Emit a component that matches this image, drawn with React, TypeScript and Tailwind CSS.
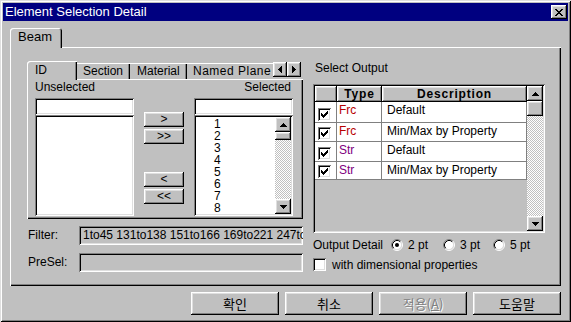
import React from 'react';

// win95-ish bevels
const raised =
  'shadow-[inset_-1px_-1px_#000,inset_1px_1px_#fff,inset_-2px_-2px_#808080,inset_2px_2px_#dfdfdf]';
const sunken =
  'shadow-[inset_1px_1px_#808080,inset_-1px_-1px_#fff,inset_2px_2px_#000,inset_-2px_-2px_#dfdfdf]';
const dither =
  'bg-[image:repeating-conic-gradient(#c0c0c0_0_25%,#fff_0_50%)] bg-[length:2px_2px]';

const UP = ['...X...', '..XXX..', '.XXXXX.', 'XXXXXXX'];
const DOWN = ['XXXXXXX', '.XXXXX.', '..XXX..', '...X...'];
const LEFT = ['...X', '..XX', '.XXX', 'XXXX', '.XXX', '..XX', '...X'];
const RIGHT = ['X...', 'XX..', 'XXX.', 'XXXX', 'XXX.', 'XX..', 'X...'];
const CLOSE = ['XX....XX', '.XX..XX.', '..XXXX..', '...XX...', '..XXXX..', '.XX..XX.', 'XX....XX'];
const CHECK = ['......X', '.....XX', 'X...XXX', 'XX.XXX.', 'XXXXX..', '.XXX...', '..X....'];

function Px({ rows, color = '#000' }: { rows: string[]; color?: string }) {
  return (
    <svg width={rows[0].length} height={rows.length} shapeRendering="crispEdges">
      {rows.flatMap((r, y) =>
        r.split('').map((c, x) =>
          c === 'X' ? <rect key={`${x}-${y}`} x={x} y={y} width={1} height={1} fill={color} /> : null
        )
      )}
    </svg>
  );
}

function ScrollBtn({ dir, h = 'h-[15px]' }: { dir: 'up' | 'down'; h?: string }) {
  return (
    <div className={`${h} w-full bg-[#c0c0c0] flex items-center justify-center ${raised}`}>
      <Px rows={dir === 'up' ? UP : DOWN} />
    </div>
  );
}

function CheckBox({ checked }: { checked: boolean }) {
  return (
    <div className={`w-[13px] h-[13px] bg-white flex items-center justify-center shrink-0 ${sunken}`}>
      {checked && <Px rows={CHECK} />}
    </div>
  );
}

function Radio({ checked }: { checked: boolean }) {
  return (
    <svg width="12" height="12" className="shrink-0">
      <circle cx="6" cy="6" r="4.5" fill="#fff" />
      <path d="M2.11 9.89 A5.5 5.5 0 0 1 9.89 2.11" fill="none" stroke="#808080" strokeWidth="1" />
      <path d="M9.89 2.11 A5.5 5.5 0 0 1 2.11 9.89" fill="none" stroke="#fff" strokeWidth="1" />
      <path d="M2.82 9.18 A4.5 4.5 0 0 1 9.18 2.82" fill="none" stroke="#000" strokeWidth="1" />
      <path d="M9.18 2.82 A4.5 4.5 0 0 1 2.82 9.18" fill="none" stroke="#dfdfdf" strokeWidth="1" />
      {checked && <circle cx="6" cy="6" r="2" fill="#000" />}
    </svg>
  );
}

const ROWS = [
  { type: 'Frc', color: 'text-[#b80000]', desc: 'Default', h: 'h-[21px]' },
  { type: 'Frc', color: 'text-[#b80000]', desc: 'Min/Max by Property', h: 'h-[19px]' },
  { type: 'Str', color: 'text-[#800080]', desc: 'Default', h: 'h-[20px]' },
  { type: 'Str', color: 'text-[#800080]', desc: 'Min/Max by Property', h: 'h-[18px]' },
];

function SmallBtn({ label, mt }: { label: string; mt: string }) {
  return (
    <div className={`${mt} h-[15px] w-[40px] bg-[#c0c0c0] flex items-center justify-center leading-[13px] ${raised}`}>
      {label}
    </div>
  );
}

export default function App() {
  return (
    <div className="w-[571px] h-[322px] bg-[#c0c0c0] p-[3px] flex flex-col overflow-hidden font-['Liberation_Sans','Noto_Sans_CJK_KR',sans-serif] text-[12px] leading-[14px] text-black shadow-[inset_1px_1px_#dfdfdf,inset_-1px_-1px_#000,inset_2px_2px_#fff,inset_-2px_-2px_#808080]">
      {/* Title bar */}
      <div className="h-[18px] bg-[#000080] flex items-center justify-between pl-[2px] pr-[1px]">
        <span className="text-white text-[13px] leading-[18px]">Element Selection Detail</span>
        <div className={`w-[16px] h-[14px] bg-[#c0c0c0] flex items-center justify-center ${raised}`}>
          <Px rows={CLOSE} />
        </div>
      </div>

      <div className="flex flex-col px-[7px] pt-[7px]">
        {/* Beam tab */}
        <div className="flex">
          <div className="relative z-10 w-[52px] h-[20px] -mb-px bg-[#c0c0c0] rounded-t-[3px] pl-[8px] pt-[2px] text-[13px] shadow-[inset_1px_1px_#fff,inset_-1px_0_#000,inset_-2px_0_#808080]">
            Beam
          </div>
        </div>

        {/* Outer panel */}
        <div className="h-[239px] flex pl-[17px] pt-[14px] shadow-[inset_1px_1px_#fff,inset_-1px_-1px_#000,inset_-2px_-2px_#808080]">
          {/* Left column */}
          <div className="w-[276px] flex flex-col">
            <div className="relative z-10 h-[18px] flex">
              <div className="w-[246px] h-[19px] flex overflow-hidden">
                <div className="w-[50px] h-[19px] shrink-0 bg-[#c0c0c0] rounded-tl-[3px] pl-[8px] pt-[2px] shadow-[inset_1px_1px_#fff,inset_-1px_0_#000,inset_-2px_0_#808080]">
                  ID
                </div>
                <div className="mt-[2px] w-[53px] h-[16px] shrink-0 pl-[6px] pt-[1px] shadow-[inset_0_1px_#fff,inset_-1px_0_#000,inset_-2px_0_#808080]">
                  Section
                </div>
                <div className="mt-[2px] w-[57px] h-[16px] shrink-0 pl-[7px] pt-[1px] shadow-[inset_0_1px_#fff,inset_-1px_0_#000,inset_-2px_0_#808080]">
                  Material
                </div>
                <div className="mt-[2px] w-[90px] h-[16px] shrink-0 pl-[6px] pt-[1px] whitespace-nowrap tracking-[0.5px] shadow-[inset_0_1px_#fff]">
                  Named Plane
                </div>
              </div>
              <div className={`mt-[1px] w-[14px] h-[15px] bg-[#c0c0c0] flex items-center justify-center ${raised}`}>
                <Px rows={LEFT} />
              </div>
              <div className={`mt-[1px] w-[14px] h-[15px] bg-[#c0c0c0] flex items-center justify-center ${raised}`}>
                <Px rows={RIGHT} />
              </div>
            </div>

            {/* Inner panel */}
            <div className="relative h-[140px] flex pl-[8px] pt-[1px] shadow-[inset_1px_1px_#fff,inset_-1px_-1px_#000,inset_-2px_-2px_#808080]">
              <div className="w-[99px] flex flex-col">
                <div className="h-[14px]">Unselected</div>
                <div className={`mt-[4px] h-[17px] bg-white ${sunken}`} />
                <div className={`h-[101px] bg-white ${sunken}`} />
              </div>
              <div className="ml-[10px] w-[40px] flex flex-col pt-[32px]">
                <SmallBtn label=">" mt="mt-0" />
                <SmallBtn label=">>" mt="mt-[2px]" />
                <SmallBtn label="<" mt="mt-[28px]" />
                <SmallBtn label="<<" mt="mt-[2px]" />
              </div>
              <div className="ml-[10px] w-[99px] flex flex-col">
                <div className="h-[14px] text-right pr-[2px]">Selected</div>
                <div className={`mt-[4px] h-[17px] bg-white ${sunken}`} />
                <div className={`h-[101px] bg-white p-[2px] flex ${sunken}`}>
                  <div className="flex-1 overflow-hidden pl-[18px] pt-[1px] text-[12px] leading-[12px]">
                    {[1, 2, 3, 4, 5, 6, 7, 8].map((n) => (
                      <div key={n} className="h-[12px]">{n}</div>
                    ))}
                  </div>
                  <div className="w-[16px] flex flex-col">
                    <ScrollBtn dir="up" />
                    <div className={`h-[8px] bg-[#c0c0c0] ${raised}`} />
                    <div className={`flex-1 ${dither}`} />
                    <ScrollBtn dir="down" />
                  </div>
                </div>
              </div>
            </div>

            {/* Filter / PreSel */}
            <div className="mt-[7px] h-[19px] flex">
              <div className="w-[52px] pl-[1px] leading-[19px]">Filter:</div>
              <div className={`w-[224px] h-[19px] pl-[4px] pr-[2px] overflow-hidden whitespace-nowrap leading-[19px] ${sunken}`}>
                1to45 131to138 151to166 169to221 247to261 263to280
              </div>
            </div>
            <div className="mt-[8px] h-[19px] flex">
              <div className="w-[52px] pl-[1px] leading-[19px]">PreSel:</div>
              <div className={`w-[224px] h-[19px] ${sunken}`} />
            </div>
          </div>

          {/* Right column */}
          <div className="ml-[10px] w-[232px] flex flex-col">
            <div className="h-[14px] pl-[2px]">Select Output</div>
            <div className={`mt-[9px] h-[149px] p-[2px] flex ${sunken}`}>
              <div className="w-[212px] flex flex-col">
                <div className="h-[16px] flex font-bold tracking-[0.8px] leading-[16px]">
                  <div className={`w-[22px] ${raised}`} />
                  <div className={`w-[45px] text-center ${raised}`}>Type</div>
                  <div className={`w-[145px] text-center ${raised}`}>Description</div>
                </div>
                {ROWS.map((r, i) => (
                  <div key={i} className={`${r.h} flex bg-white`}>
                    <div className="w-[22px] border-r border-b border-[#808080] flex items-end pl-[3px] pb-[1px]">
                      <CheckBox checked />
                    </div>
                    <div className={`w-[45px] border-r border-b border-[#808080] pl-[2px] pt-[1px] ${r.color}`}>
                      {r.type}
                    </div>
                    <div className="w-[145px] border-r border-b border-[#808080] pl-[5px] pt-[1px]">
                      {r.desc}
                    </div>
                  </div>
                ))}
              </div>
              <div className="w-[16px] flex flex-col">
                <ScrollBtn dir="up" />
                <div className={`h-[15px] bg-[#c0c0c0] ${raised}`} />
                <div className={`flex-1 ${dither}`} />
                <ScrollBtn dir="down" />
              </div>
            </div>

            <div className="mt-[4px] h-[16px] flex items-center">
              <span>Output Detail</span>
              <span className="ml-[8px] flex"><Radio checked /></span>
              <span className="ml-[5px]">2 pt</span>
              <span className="ml-[15px] flex"><Radio checked={false} /></span>
              <span className="ml-[5px]">3 pt</span>
              <span className="ml-[13px] flex"><Radio checked={false} /></span>
              <span className="ml-[5px]">5 pt</span>
            </div>
            <div className="mt-[4px] h-[15px] flex items-center">
              <CheckBox checked={false} />
              <span className="ml-[6px]">with dimensional properties</span>
            </div>
          </div>
        </div>

        {/* Dialog buttons */}
        <div className="mt-[6px] flex justify-end gap-[6px] font-['Noto_Sans_CJK_KR',sans-serif] text-[13px]">
          <div className={`w-[88px] h-[23px] flex items-center justify-center ${raised}`}>확인</div>
          <div className={`w-[88px] h-[23px] flex items-center justify-center ${raised}`}>취소</div>
          <div className={`w-[88px] h-[23px] flex items-center justify-center text-[#808080] [text-shadow:1px_1px_#fff] ${raised}`}>
            적용(<span className="underline">A</span>)
          </div>
          <div className={`w-[88px] h-[23px] flex items-center justify-center ${raised}`}>도움말</div>
        </div>
      </div>
    </div>
  );
}
